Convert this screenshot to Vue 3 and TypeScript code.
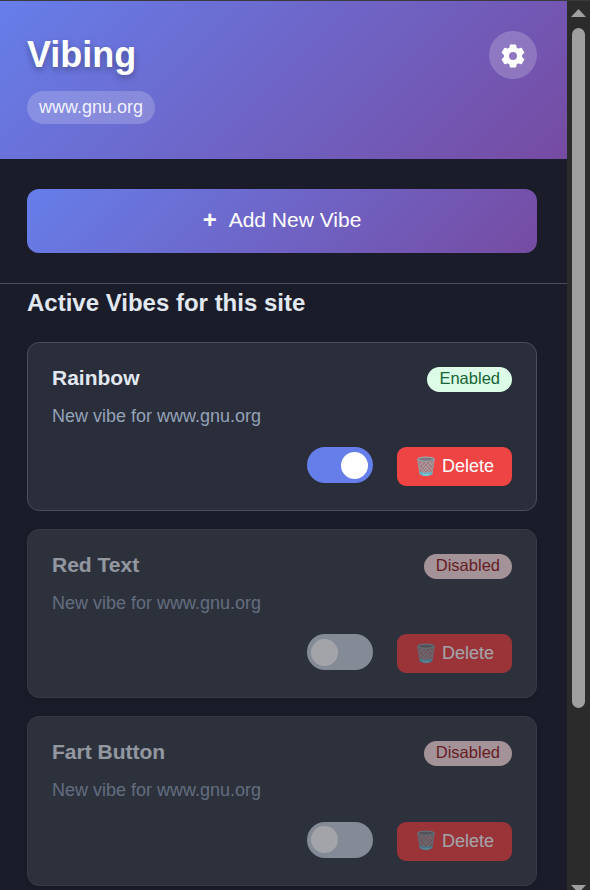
<script setup lang="ts">
import { ref } from 'vue'

interface Vibe {
  id: number
  name: string
  description: string
  enabled: boolean
}

const site = 'www.gnu.org'
const teeth = [0, 60, 120, 180, 240, 300]

const vibes = ref<Vibe[]>([
  { id: 1, name: 'Rainbow', description: `New vibe for ${site}`, enabled: true },
  { id: 2, name: 'Red Text', description: `New vibe for ${site}`, enabled: false },
  { id: 3, name: 'Fart Button', description: `New vibe for ${site}`, enabled: false },
])

function toggle(vibe: Vibe) {
  vibe.enabled = !vibe.enabled
}

function remove(id: number) {
  vibes.value = vibes.value.filter((v) => v.id !== id)
}
</script>

<template>
  <div class="window">
    <main class="popup">
      <header class="header">
        <div class="brand">
          <h1>Vibing</h1>
          <span class="site">{{ site }}</span>
        </div>
        <button class="settings" type="button">
          <svg viewBox="-12 -12 24 24" width="24" height="24">
            <circle r="6.5" fill="none" stroke="#fff" stroke-width="5" />
            <path
              v-for="angle in teeth"
              :key="angle"
              :transform="`rotate(${angle})`"
              d="M-4.4-7 -3.6-8.8 -3.2-10.8Q-3.1-11.6-2.3-11.6H2.3Q3.1-11.6 3.2-10.8L3.6-8.8 4.4-7Z"
              fill="#fff"
            />
          </svg>
        </button>
      </header>

      <section class="add">
        <button class="add-button" type="button"><span class="plus">+</span>Add New Vibe</button>
      </section>

      <section class="list">
        <h2>Active Vibes for this site</h2>
        <article v-for="vibe in vibes" :key="vibe.id" class="card" :class="{ disabled: !vibe.enabled }">
          <div class="card-head">
            <h3>{{ vibe.name }}</h3>
            <span class="badge">{{ vibe.enabled ? 'Enabled' : 'Disabled' }}</span>
          </div>
          <p>{{ vibe.description }}</p>
          <div class="actions">
            <button class="toggle" type="button" @click="toggle(vibe)"><span class="knob"></span></button>
            <button class="delete" type="button" @click="remove(vibe.id)">
              <svg class="bin" viewBox="0 0 22 22" width="22" height="22">
                <path d="M2.6 3 5 18.6Q11 22 17 18.6L19.4 3Z" fill="#8d7f83" fill-opacity=".72" />
                <path d="M4.7 15.4 5.1 18.5Q11 22 16.9 18.5L17.3 15.4Q11 17.6 4.7 15.4Z" fill="#5fb0c4" />
                <path
                  d="M3.2 5.5 14.5 17.5M6.5 6 16.3 16.5M10.5 6 17 14M14.5 6 18 10.5M3.9 10.5 11 17.5M18.8 5.5 7.5 17.5M15.5 6 5.7 16.5M11.5 6 5 14M7.5 6 4 10.5M18.1 10.5 11 17.5"
                  fill="none"
                  stroke="#9dbcc3"
                  stroke-width=".65"
                />
                <path d="M2.8 3.3 5 18.6M19.2 3.3 17 18.6" stroke="#8ba9b0" stroke-width=".8" />
                <ellipse cx="11" cy="3.2" rx="8.5" ry="2.1" fill="#7d777b" stroke="#96b3b9" stroke-width="1" />
                <path d="M7.5 18.6Q11 19.6 14.5 18.6" fill="none" stroke="#a4d5df" stroke-width="1" />
              </svg>
              Delete
            </button>
          </div>
        </article>
      </section>
    </main>

    <aside class="scrollbar">
      <svg class="arrow" viewBox="0 0 15 8" width="15" height="8"><path d="M0 8 7.5 0 15 8Z" fill="#9f9f9f" /></svg>
      <div class="thumb"></div>
      <svg class="arrow down" viewBox="0 0 15 8" width="15" height="8"><path d="M0 0H15L7.5 8Z" fill="#9f9f9f" /></svg>
    </aside>
  </div>
</template>

<style>
body {
  background: #1a1d29;
  overflow: hidden;
}
</style>

<style scoped>
.window {
  box-sizing: border-box;
  display: flex;
  width: 590px;
  height: 890px;
  overflow: hidden;
  border-top: 1px solid #3b3b3d;
  background: #1a1d29;
  color: #e2e8f0;
  font-family: 'Liberation Sans', Arial, sans-serif;
}

.window * {
  box-sizing: border-box;
}

button {
  border: 0;
  padding: 0;
  font-family: inherit;
  color: #fff;
  cursor: pointer;
}

h1,
h2,
h3,
p {
  margin: 0;
}

.popup {
  width: 567px;
  height: 889px;
  overflow: hidden;
}

.header {
  display: flex;
  align-items: flex-start;
  justify-content: space-between;
  height: 158px;
  padding: 30px 30px 0 27px;
  background: linear-gradient(135deg, #667eea 0%, #764ba2 100%);
}

.brand {
  display: flex;
  flex-direction: column;
  align-items: flex-start;
  gap: 12px;
}

h1 {
  height: 48px;
  font-size: 36px;
  line-height: 48px;
  color: #fff;
  text-shadow: 0 3px 6px rgba(0, 0, 0, 0.3);
}

.site {
  height: 33px;
  padding: 0 12px;
  border-radius: 18px;
  background: rgba(255, 255, 255, 0.2);
  color: rgba(255, 255, 255, 0.9);
  font-size: 18px;
  line-height: 33px;
}

.settings {
  display: flex;
  align-items: center;
  justify-content: center;
  width: 48px;
  height: 48px;
  padding-top: 1px;
  border-radius: 50%;
  background: rgba(255, 255, 255, 0.2);
}

.add {
  height: 125px;
  padding: 30px 30px 0 27px;
  border-bottom: 1px solid #4a4d5a;
}

.add-button {
  display: flex;
  align-items: center;
  justify-content: center;
  gap: 12px;
  width: 100%;
  height: 64px;
  padding-bottom: 2px;
  border-radius: 12px;
  background: linear-gradient(135deg, #667eea 0%, #764ba2 100%);
  font-size: 21px;
}

.plus {
  font-size: 24px;
  font-weight: 700;
}

.list {
  display: flex;
  flex-direction: column;
  gap: 18px;
  padding: 4.8px 30px 0 27px;
}

h2 {
  height: 35px;
  font-size: 24px;
  line-height: 27px;
}

.card {
  display: flex;
  flex-direction: column;
  height: 169.25px;
  padding: 24px;
  border: 1px solid #4a4d5a;
  border-radius: 12px;
  background: #2a2d3a;
}

.card.disabled {
  background: #3a3f4a;
  opacity: 0.6;
  box-shadow: 0 1.5px 4.5px rgba(0, 0, 0, 0.1);
}

.card-head {
  display: flex;
  justify-content: space-between;
  height: 25px;
}

h3 {
  font-size: 21px;
  line-height: 22px;
}

.badge {
  height: 25px;
  padding: 0 12px;
  border-radius: 18px;
  background: #dcfce7;
  color: #166534;
  font-size: 16.5px;
  line-height: 22.5px;
}

.disabled .badge {
  background: #fee2e2;
  color: #991b1b;
}

p {
  margin-top: 11px;
  font-size: 18px;
  line-height: 27px;
  color: #94a3b8;
}

.actions {
  display: flex;
  justify-content: flex-end;
  gap: 24px;
  margin-top: 17.25px;
}

.toggle {
  display: flex;
  align-items: center;
  justify-content: flex-end;
  width: 66px;
  height: 36px;
  padding: 0 5px 0 4px;
  border-radius: 18px;
  background: #667eea;
}

.disabled .toggle {
  justify-content: flex-start;
  background: #cbd5e1;
}

.knob {
  width: 27px;
  height: 27px;
  border-radius: 50%;
  background: #fff;
}

.delete {
  display: flex;
  align-items: center;
  width: 115px;
  height: 39px;
  padding-left: 18px;
  gap: 5px;
  border-radius: 9px;
  background: #ef4444;
  font-size: 18px;
}

.scrollbar {
  display: flex;
  flex-direction: column;
  align-items: center;
  width: 23px;
  height: 889px;
  padding-top: 8px;
  background: #2b2b2b;
}

.arrow {
  display: block;
  flex: none;
}

.thumb {
  flex: none;
  width: 13px;
  height: 680px;
  margin-top: 11px;
  border-radius: 7px;
  background: #9f9f9f;
}

.down {
  margin-top: 177px;
}
</style>
